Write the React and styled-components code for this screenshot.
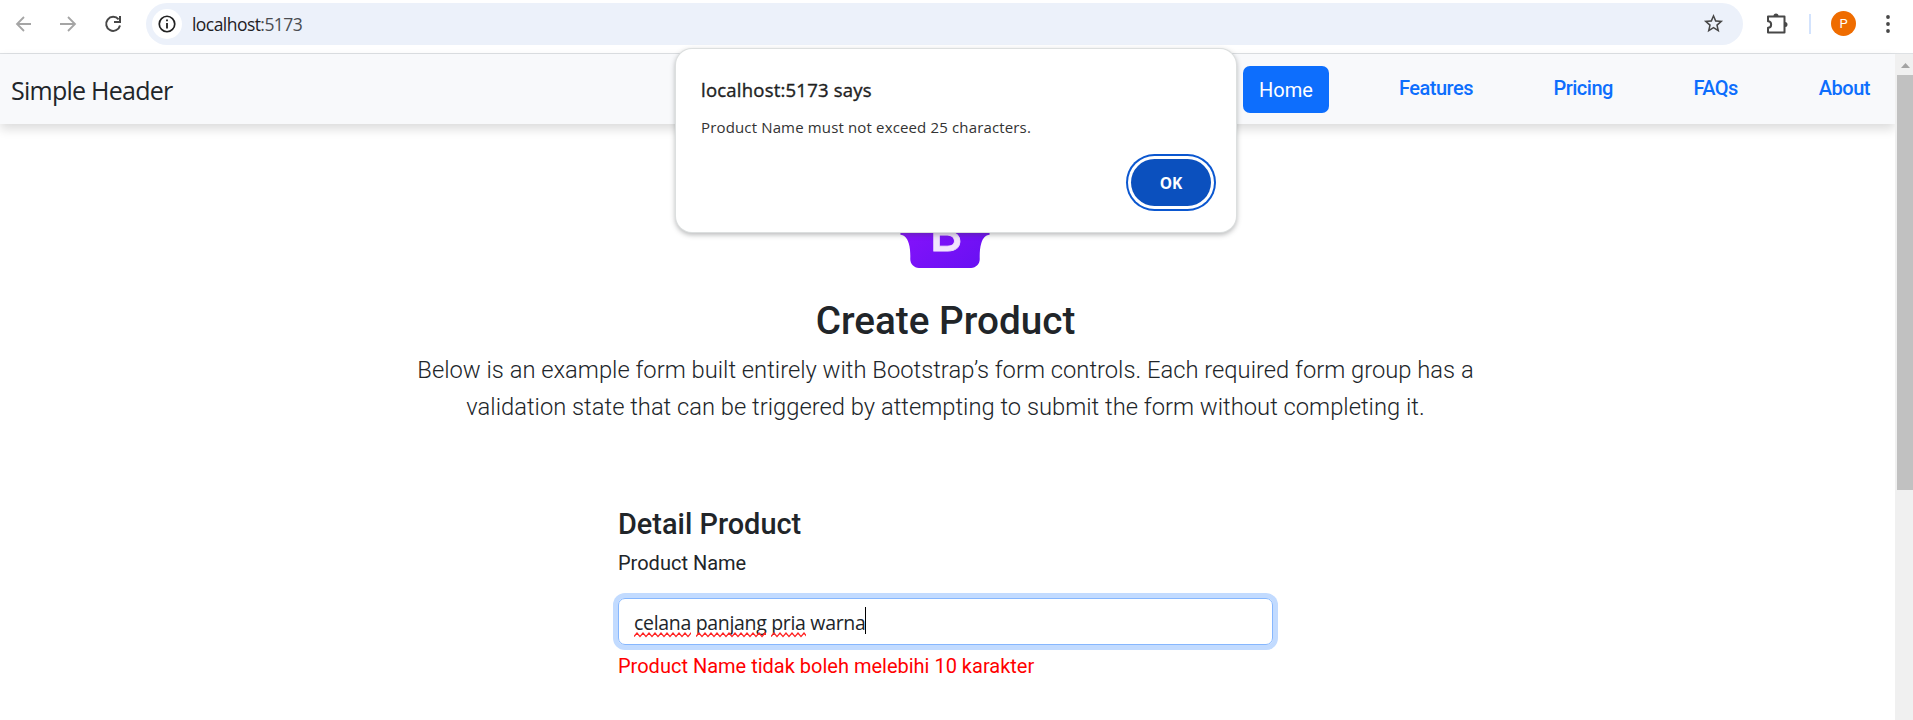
import React from "react";
import styled, { createGlobalStyle } from "styled-components";

const Global = createGlobalStyle`
  * { box-sizing: border-box; }
  html, body { margin: 0; background: #fff; overflow: hidden; }
  body { font-family: Roboto, sans-serif; color: #212529; }
`;
const segoe = `"Open Sans", "Noto Sans", sans-serif`;

const Window = styled.div`
  position: relative; display: flex; flex-direction: column;
  width: 1913px; height: 720px; overflow: hidden; background: #fff;
`;
const Toolbar = styled.div`
  display: flex; align-items: center; flex: none; height: 54px;
  padding: 0 14px 6px 14px; border-bottom: 1px solid #dee1e4;
`;
const ToolIcon = styled.svg`
  flex: none; display: block; width: ${p => p.$size || 20}px; height: ${p => p.$size || 20}px;
  margin-left: ${p => p.$ml || 0}px; color: ${p => p.$color || "#474747"};
`;
const AddressBar = styled.div`
  display: flex; align-items: center; flex: none; width: 1597px; height: 42px;
  margin-left: 23px; padding: 0 18px 0 6px; border-radius: 21px; background: #ecf1fa;
`;
const InfoBadge = styled.div`
  display: flex; align-items: center; justify-content: center;
  width: 30px; height: 30px; border-radius: 50%; background: #fff;
`;
const Url = styled.span`
  flex: 1; margin-left: 10px; font: 400 17.5px/24px ${segoe}; letter-spacing: -0.55px; color: #4a4d51;
`;
const Host = styled.span`color: #1f2023;`;
const Divider = styled.div`width: 2px; height: 20px; margin-left: 20px; background: #d3e3fd;`;
const Avatar = styled.div`
  width: 25px; height: 25px; margin-left: 20px; border-radius: 50%; background: #ef6c00;
  color: #fff; font: 400 13px/25px Roboto, sans-serif; text-align: center;
`;

const Viewport = styled.div`display: flex; flex: 1; min-height: 0;`;
const Page = styled.div`flex: 1; min-width: 0;`;
const Header = styled.header`
  display: flex; align-items: flex-start; justify-content: space-between; height: 70px;
  padding: 12px 25px 0 11px; background: #f8f9fb; box-shadow: 0 5px 10px rgba(0,0,0,.14);
`;
const Brand = styled.div`font: 400 25px/48px ${segoe}; letter-spacing: -0.75px;`;
const Nav = styled.nav`display: flex; align-items: flex-start;`;
const NavLink = styled.a`
  margin-left: ${p => p.$gap}px; color: #0d6efd; font-weight: 500; font-size: 20px; line-height: 44px;
  letter-spacing: -0.5px;
`;
const NavPill = styled.a`
  width: 86px; height: 47px; border-radius: 7px; background: #0d6efd; color: #fff;
  font-size: 20px; line-height: 48px; text-align: center;
`;

const Main = styled.main`
  display: flex; flex-direction: column; align-items: center; padding: 73px 4px 0 0;
`;
const Logo = styled.svg`display: block; width: 90px; height: 71px; margin-right: 2px;`;
const Title = styled.h1`margin: 29px 0 0; font-weight: 500; font-size: 38.7px; line-height: 48px;`;
const Lead = styled.p`
  margin: 7px 0 0; font-weight: 300; font-size: 23.75px; line-height: 37px; text-align: center;
`;
const Form = styled.form`width: 655px; margin-top: 80px;`;
const FormTitle = styled.h4`margin: 0; font-weight: 500; font-size: 28.9px; line-height: 36px;`;
const Label = styled.label`display: block; margin-top: 6px; font-size: 20px; line-height: 30px;`;
const Field = styled.div`
  display: flex; align-items: center; height: 47px; margin-top: 20px; padding: 2px 15px 0;
  border: 1px solid #86b7fe; border-radius: 7px; box-shadow: 0 0 0 5px #c2dbff;
`;
const FieldValue = styled.span`
  font: 400 19.5px/28px ${segoe}; letter-spacing: -0.32px; white-space: pre;
`;
const Misspelt = styled.span`position: relative;`;
const Wave = styled.svg`position: absolute; left: 0; top: 23px; width: 100%; height: 6px;`;
const Caret = styled.span`width: 1px; height: 27px; background: #000; margin-top: -4px;`;
const ErrorText = styled.div`margin-top: 6px; font-size: 20px; line-height: 30px; color: #f00;`;

const Scrollbar = styled.div`
  display: flex; flex-direction: column; width: 18px; padding-left: 2px; background: #f0f0f0;
`;
const ScrollArrow = styled.svg`display: block; width: 16px; height: 21px;`;
const Thumb = styled.div`height: 415px; background: #c1c1c1;`;

const Dialog = styled.section`
  position: absolute; left: 676px; top: 49px; width: 560px; height: 183px;
  display: flex; flex-direction: column; padding: 26px 25px 0 25px; background: #fff; border-radius: 16px;
  box-shadow: 0 0 0 1px #dcdfdf, 0 2px 5px 1px rgba(60,64,67,.35);
`;
const DialogTitle = styled.div`
  font: 400 18.5px/30px ${segoe}; letter-spacing: 0.22px; color: #1f1f1f; -webkit-text-stroke: 0.4px #1f1f1f;
`;
const DialogText = styled.div`
  margin-top: 10px; font: 400 15px/24px ${segoe}; letter-spacing: 0.15px; color: #333;
`;
const OkButton = styled.button`
  align-self: flex-end; width: 80px; height: 47px; margin-top: 20px; padding: 0; border: 0; border-radius: 24px;
  background: #0b50be; color: #fff; font: 700 15.5px/48px ${segoe};
  box-shadow: 0 0 0 3px #fff, 0 0 0 5px #0b57d0;
`;

const Arrow = ({ flip, ml }) => (
  <ToolIcon viewBox="0 0 20 20" $color="#a5a5a5" $ml={ml}>
    <path d={flip ? "M2 10h15M10 3l7 7-7 7" : "M17 10H3M10 3l-7 7 7 7"} fill="none" stroke="currentColor" strokeWidth="1.8" />
  </ToolIcon>
);
const zigzag = (() => {
  let d = "M0 4.6";
  for (let x = 3, up = true; x < 90; x += 3, up = !up) d += `L${x} ${up ? 1 : 4.6}`;
  return d;
})();
const Typo = ({ children }) => (
  <Misspelt>{children}<Wave><path d={zigzag} fill="none" stroke="#f22" strokeWidth="1.3" /></Wave></Misspelt>
);

export default function App() {
  return (
    <Window>
      <Global />
      <Toolbar>
        <Arrow />
        <Arrow flip ml={24} />
        <ToolIcon viewBox="0 0 20 20" $ml={25}>
          <path d="M15.6 5.4A7 7 0 1 0 17 11.5M17 2v6h-6" fill="none" stroke="currentColor" strokeWidth="2" />
        </ToolIcon>
        <AddressBar>
          <InfoBadge>
            <ToolIcon viewBox="0 0 20 20" $size={18} $color="#222">
              <circle cx="10" cy="10" r="8.6" fill="none" stroke="currentColor" strokeWidth="1.9" />
              <path d="M10 9v6M10 5v2" stroke="currentColor" strokeWidth="2" />
            </ToolIcon>
          </InfoBadge>
          <Url><Host>localhost</Host>:5173</Url>
          <ToolIcon viewBox="0 0 24 24" $size={23}>
            <path d="m22 9.24-7.19-.62L12 2 9.19 8.63 2 9.24l5.46 4.73L5.82 21 12 17.27 18.18 21l-1.63-7.03L22 9.24zM12 15.4l-3.76 2.27 1-4.28-3.32-2.88 4.38-.38L12 6.1l1.71 4.04 4.38.38-3.32 2.88 1 4.28L12 15.4z" fill="currentColor" />
          </ToolIcon>
        </AddressBar>
        <ToolIcon viewBox="0 0 24 24" $size={24} $ml={22}>
          <path d="M3 4.500h16.500v16H3v-4.700c4.200 0 4.200-6.600 0-6.600z" fill="none" stroke="currentColor" strokeWidth="2" strokeLinejoin="round" />
          <path d="M8.500 4a2.500 2.500 0 0 1 5 0zM20 10a2.500 2.500 0 0 1 0 5z" fill="currentColor" />
        </ToolIcon>
        <Divider />
        <Avatar>P</Avatar>
        <ToolIcon viewBox="0 0 20 20" $ml={22}>
          <circle cx="10" cy="3" r="1.9" fill="currentColor" />
          <circle cx="10" cy="10" r="1.9" fill="currentColor" />
          <circle cx="10" cy="17" r="1.9" fill="currentColor" />
        </ToolIcon>
      </Toolbar>
      <Viewport>
        <Page>
          <Header>
            <Brand>Simple Header</Brand>
            <Nav>
              <NavPill>Home</NavPill>
              <NavLink $gap={70}>Features</NavLink>
              <NavLink $gap={80.5}>Pricing</NavLink>
              <NavLink $gap={80.5}>FAQs</NavLink>
              <NavLink $gap={81}>About</NavLink>
            </Nav>
          </Header>
          <Main>
            <Logo viewBox="0 0 118 94">
              <defs>
                <linearGradient id="violet" x1="0" y1="0" x2="1" y2="1">
                  <stop offset="0" stopColor="#9013fe" /><stop offset="1" stopColor="#6610f2" />
                </linearGradient>
              </defs>
              <path fill="url(#violet)" d="M24.509 0c-6.733 0-11.715 5.893-11.492 12.284.214 6.14-.064 14.092-2.066 20.577C8.943 39.365 5.547 43.485 0 44.014v5.972c5.547.529 8.943 4.649 10.951 11.153 2.002 6.485 2.28 14.437 2.066 20.577C12.794 88.106 17.776 94 24.51 94H93.5c6.733 0 11.714-5.893 11.491-12.284-.214-6.14.064-14.092 2.066-20.577 2.009-6.504 5.396-10.624 10.943-11.153v-5.972c-5.547-.529-8.934-4.649-10.943-11.153-2.002-6.484-2.28-14.437-2.066-20.577C105.214 5.894 100.233 0 93.5 0H24.508z" />
              <text x="60.5" y="71.500" textAnchor="middle" fontFamily="Inter, sans-serif" fontWeight="500" fontSize="66" fill="#f1e5fc" stroke="#f1e5fc" strokeWidth="1">B</text>
            </Logo>
            <Title>Create Product</Title>
            <Lead>
              Below is an example form built entirely with Bootstrap’s form controls. Each required form group has a<br />
              validation state that can be triggered by attempting to submit the form without completing it.
            </Lead>
            <Form>
              <FormTitle>Detail Product</FormTitle>
              <Label>Product Name</Label>
              <Field>
                <FieldValue><Typo>celana</Typo> <Typo>panjang</Typo> <Typo>pria</Typo> warna</FieldValue>
                <Caret />
              </Field>
              <ErrorText>Product Name tidak boleh melebihi 10 karakter</ErrorText>
            </Form>
          </Main>
        </Page>
        <Scrollbar>
          <ScrollArrow viewBox="0 0 16 21"><path d="M4 14l4.500-5 4.500 5z" fill="#a3a3a3" /></ScrollArrow>
          <Thumb />
        </Scrollbar>
      </Viewport>
      <Dialog>
        <DialogTitle>localhost:5173 says</DialogTitle>
        <DialogText>Product Name must not exceed 25 characters.</DialogText>
        <OkButton>OK</OkButton>
      </Dialog>
    </Window>
  );
}
